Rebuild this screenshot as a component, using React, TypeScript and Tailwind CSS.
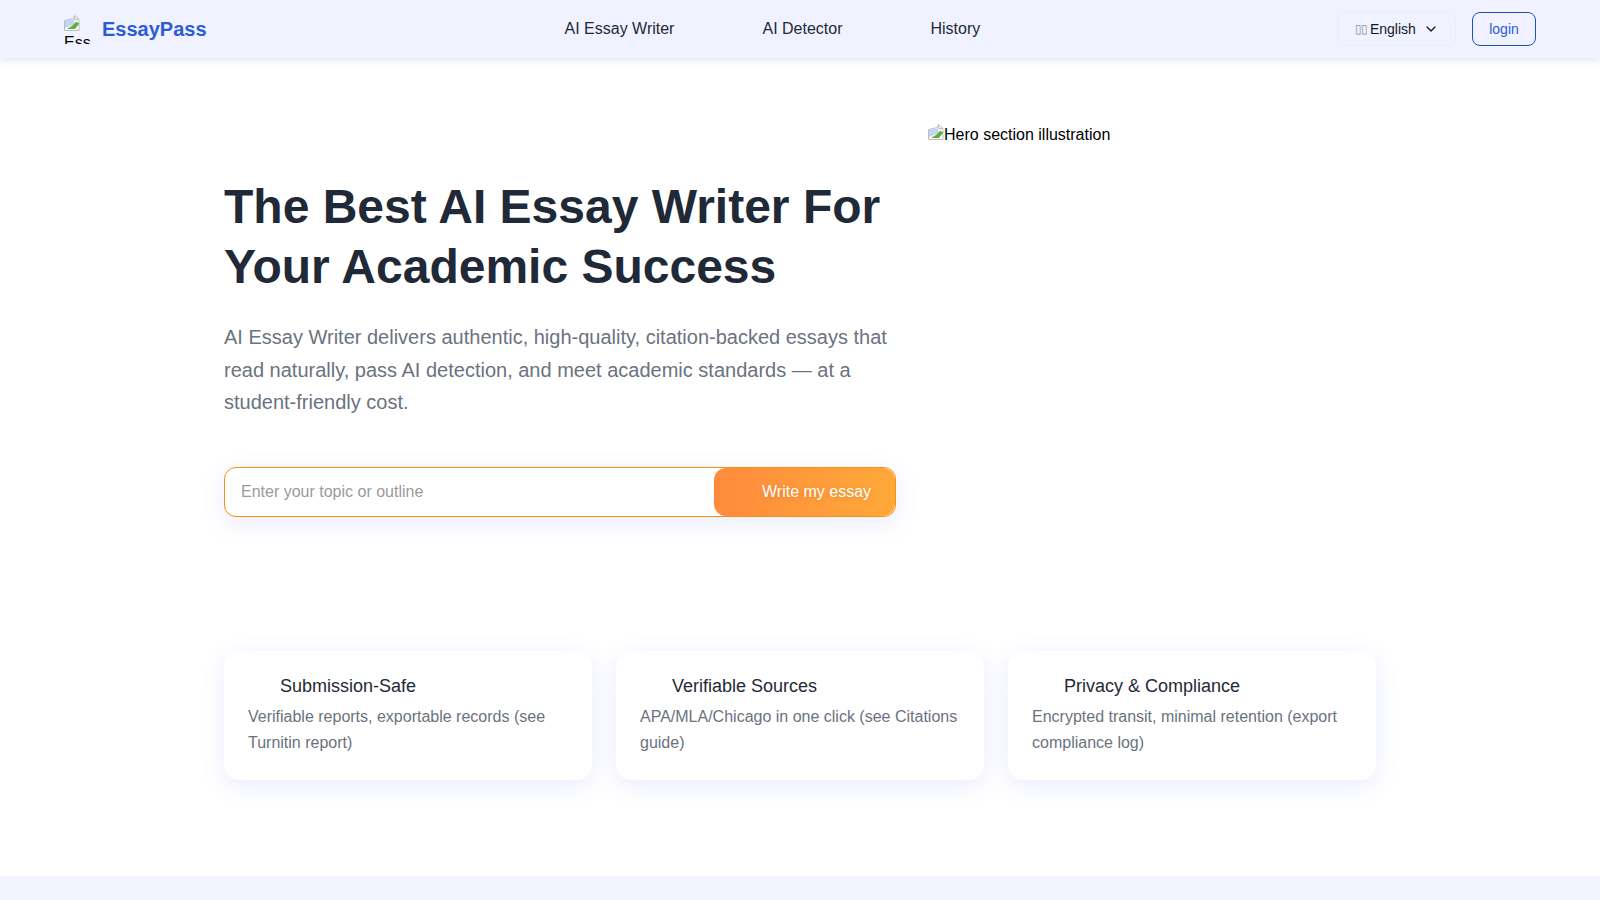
import { ChevronDown } from "lucide-react";

// Chrome's broken image glyph
function BrokenImage() {
    return (
        <svg width="16" height="16" viewBox="0 0 16 16" className="-mt-[2px] shrink-0">
            <path d="M0.5 5.5l9-2 1-3 4.5 4v11h-14.5z" fill="#fff" stroke="#bcbcbc" strokeWidth="1" />
            <path d="M1 6l8-2 3 5-11 4z" fill="#c3d3f5" />
            <path d="M9.5 3l1-2 4 4v3l-4 1z" fill="#f2f2f2" />
            <path d="M3 14l5-3 4-4 3 1v1l-4 5z" fill="#5cae40" />
            <path d="M10.5 0.5v4h4.5" fill="none" stroke="#bcbcbc" strokeWidth="1" />
        </svg>
    );
}

const navLinks = ["AI Essay Writer", "AI Detector", "History"];

const features = [
    {
        title: "Submission-Safe",
        text: "Verifiable reports, exportable records (see Turnitin report)",
    },
    {
        title: "Verifiable Sources",
        text: "APA/MLA/Chicago in one click (see Citations guide)",
    },
    {
        title: "Privacy & Compliance",
        text: "Encrypted transit, minimal retention (export compliance log)",
    },
];

export default function App() {
    return (
        <div className="h-[900px] overflow-hidden bg-white font-['Liberation_Sans',Arial,sans-serif] text-black">
            <header className="flex h-[58px] items-center bg-[#f0f3ff] pl-16 pr-16 shadow-[0_2px_8px_rgba(100,110,160,0.2)]">
                <div className="flex w-[500.5px] items-center">
                    <div className="h-[29px] w-[27px] overflow-hidden pt-[2px] text-[16px] leading-[18px]">
                        <BrokenImage />
                        <span className="mt-[3px] block">EssayPass</span>
                    </div>
                    <span className="ml-[11px] text-[20px] font-bold text-[#2b5cd6]">EssayPass</span>
                </div>

                <nav className="flex gap-[88px] text-[16px] text-[#1f2937]">
                    {navLinks.map((link) => (
                        <a key={link}>{link}</a>
                    ))}
                </nav>

                <div className="ml-auto flex items-center gap-4">
                    <div className="flex h-[34px] w-[118px] items-center gap-[7px] rounded-md border border-[#eaeef5] pl-4 text-[14px] text-[#111827]">
                        <span>
                            <span className="align-[1px] text-[12px] tracking-[-1.5px] text-[#8a8f9a]">▯▯</span> English
                        </span>
                        <ChevronDown size={16} strokeWidth={2} />
                    </div>
                    <button className="h-[34px] w-16 rounded-lg border border-[#1d4fc0] text-[14px] text-[#2b5cd6]">
                        login
                    </button>
                </div>
            </header>

            <main className="mx-auto w-[1152px]">
                <section className="flex gap-8 pt-[68px]">
                    <div className="w-[672px] pt-[51px]">
                        <h1 className="text-[48px] leading-[60px] font-bold text-[#1f2937]">
                            The Best AI Essay Writer For Your Academic Success
                        </h1>
                        <p className="mt-6 text-[20px] leading-[32.5px] text-[#6b7280]">
                            AI Essay Writer delivers authentic, high-quality, citation-backed essays that read naturally, pass AI detection, and meet academic standards — at a student-friendly cost.
                        </p>
                        <div className="mt-[48px] flex h-[50px] overflow-hidden rounded-xl border border-[#fb8c14] bg-white shadow-[0_6px_24px_rgba(80,110,240,0.12)]">
                            <input
                                className="min-w-0 flex-1 bg-transparent px-4 text-[16px] outline-none placeholder:text-[#9a9a9a]"
                                placeholder="Enter your topic or outline"
                            />
                            <button className="w-[181px] rounded-xl bg-gradient-to-r from-[#ff8a3c] to-[#ffa938] pl-[48px] pr-6 text-left text-[16px] whitespace-nowrap text-white [text-shadow:0_1px_6px_rgba(0,0,0,0.15)]">
                                Write my essay
                            </button>
                        </div>
                    </div>
                    <div className="flex h-5 items-start text-[16px] leading-[18px]">
                        <BrokenImage />
                        <span>Hero section illustration</span>
                    </div>
                </section>

                <section className="mt-[134px] grid grid-cols-3 gap-6">
                    {features.map((feature) => (
                        <div
                            key={feature.title}
                            className="h-[129px] rounded-2xl bg-white px-6 pt-[25px] shadow-[0_6px_24px_rgba(80,110,240,0.12)]"
                        >
                            <h3 className="pl-8 text-[18px] leading-[21px] text-[#1f2937]">{feature.title}</h3>
                            <p className="mt-[7px] text-[16px] leading-[26px] text-[#6b7280]">{feature.text}</p>
                        </div>
                    ))}
                </section>
            </main>

            <div className="mt-[96px] h-10 bg-[#f4f4fe]" />
        </div>
    );
}
